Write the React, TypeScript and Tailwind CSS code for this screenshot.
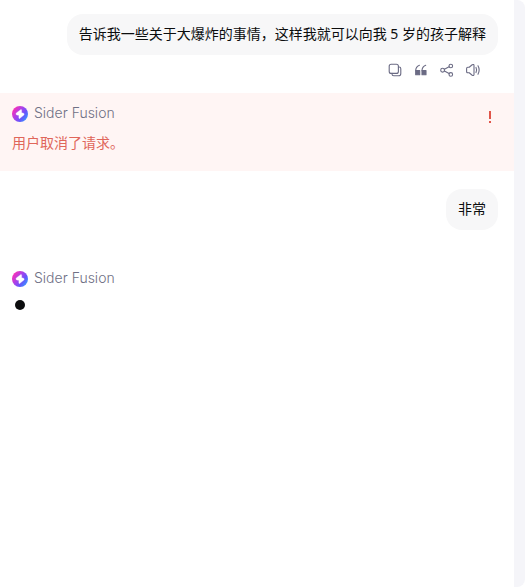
import type { ReactNode } from "react";

function UserBubble({ children }: { children: ReactNode }) {
  return (
    <div className="rounded-2xl bg-[#f7f7f8] px-3 pt-[9px] pb-[11px] text-sm leading-[21px] text-[#0c0d0e]">
      {children}
    </div>
  );
}

function FusionLogo({ id }: { id: string }) {
  return (
    <svg className="size-4" viewBox="0 0 16 16" aria-hidden="true">
      <defs>
        <linearGradient id={id} x1="1" y1="3" x2="15" y2="13" gradientUnits="userSpaceOnUse">
          <stop offset="0" stopColor="#ff2fb4" />
          <stop offset="0.45" stopColor="#a044ee" />
          <stop offset="0.7" stopColor="#6854fb" />
          <stop offset="1" stopColor="#3a94ff" />
        </linearGradient>
      </defs>
      <circle cx="8" cy="8" r="8" fill={`url(#${id})`} />
      <path
        d="M8.7 3.7 4.3 7Q3.5 8.2 4.6 8.9L6.9 9.3V11.9Q7 13 7.9 12.3L11.9 9Q12.7 7.8 11.5 7.2L9.6 6.8V4.2Q9.4 3.2 8.7 3.7Z"
        fill="white"
        stroke="white"
        strokeWidth="0.4"
        strokeLinejoin="round"
      />
    </svg>
  );
}

function BotName({ id }: { id: string }) {
  return (
    <div className="flex items-end gap-1.5">
      <FusionLogo id={id} />
      <span className="font-['Inter','Liberation_Sans',sans-serif] text-sm leading-[18px] font-light text-[#6f7085]">
        Sider Fusion
      </span>
    </div>
  );
}

function ActionButton({ label, children }: { label: string; children: ReactNode }) {
  return (
    <button type="button" aria-label={label} className="flex size-4 items-center justify-center">
      <svg
        className="size-4"
        viewBox="0 0 16 16"
        fill="none"
        stroke="currentColor"
        strokeWidth="1.1"
        strokeLinecap="round"
        strokeLinejoin="round"
        aria-hidden="true"
      >
        {children}
      </svg>
    </button>
  );
}

function Actions() {
  return (
    <div className="flex gap-2.5 pr-[17px] text-[#6b6b84]">
      <ActionButton label="复制">
        <rect x="2.2" y="2.2" width="9.2" height="9.2" rx="2" />
        <path d="M11.4 5H12Q13.8 5 13.8 6.8V11.4Q13.8 13.8 11.4 13.8H6.8Q5 13.8 5 12V11.4" />
      </ActionButton>
      <ActionButton label="引用">
        <path d="M6.4 3.2Q2.7 4.6 2.7 8.8M12.7 3.2Q9 4.6 9 8.8" />
        <path d="M2.7 8.6H6.7V12.8H2.7ZM9 8.6H13V12.8H9Z" fill="currentColor" />
      </ActionButton>
      <ActionButton label="分享">
        <circle cx="3.6" cy="8.2" r="1.9" />
        <circle cx="11.8" cy="4" r="1.8" />
        <circle cx="11.8" cy="12.4" r="1.8" />
        <path d="M5.4 7.3 10.1 4.8M5.4 9.1 10.1 11.6" />
      </ActionButton>
      <ActionButton label="朗读">
        <path d="M1.6 6.4Q1.6 5.2 2.8 5.2H4.2L7.2 2.8Q9 1.8 9 3.7V12.3Q9 14.2 7.2 13.2L4.2 10.8H2.8Q1.6 10.8 1.6 9.6Z" />
        <path d="M11 5.4Q12.3 8 11 10.6M13 3.8Q15.3 8 13 12.2" />
      </ActionButton>
    </div>
  );
}

export default function App() {
  return (
    <div className="flex min-h-screen bg-white font-['Noto_Sans','Noto_Sans_CJK_SC',sans-serif]">
      <main className="min-w-0 flex-1">
        <section className="flex flex-col items-end gap-[7px] pt-3.5 pr-4 pb-[15px] pl-3">
          <UserBubble>告诉我一些关于大爆炸的事情，这样我就可以向我 5 岁的孩子解释</UserBubble>
          <Actions />
        </section>

        <section className="flex items-start justify-between bg-[#fff5f4] pt-[11px] pr-5 pb-[18px] pl-3">
          <div>
            <BotName id="fusion-error" />
            <p className="pt-[11px] text-sm leading-5 text-[#e0665a]">用户取消了请求。</p>
          </div>
          <button type="button" aria-label="错误详情" className="mt-[7px] flex h-3 w-2 justify-center">
            <svg className="h-3 w-2" viewBox="0 0 8 12" aria-hidden="true">
              <path d="M3 0H5V8H3ZM3 10H5V12H3Z" fill="#e0554a" />
            </svg>
          </button>
        </section>

        <section className="flex justify-end pt-[18px] pr-4 pb-[39px]">
          <UserBubble>非常</UserBubble>
        </section>

        <section className="pl-3">
          <BotName id="fusion-pending" />
          <div className="pt-[13px] pl-[3px]" role="status" aria-label="正在生成">
            <div className="size-2.5 rounded-full bg-[#0c0d0e]" />
          </div>
        </section>
      </main>
      <aside className="w-[11px] shrink-0 rounded-r-lg bg-[#f5f5f9]" />
    </div>
  );
}
